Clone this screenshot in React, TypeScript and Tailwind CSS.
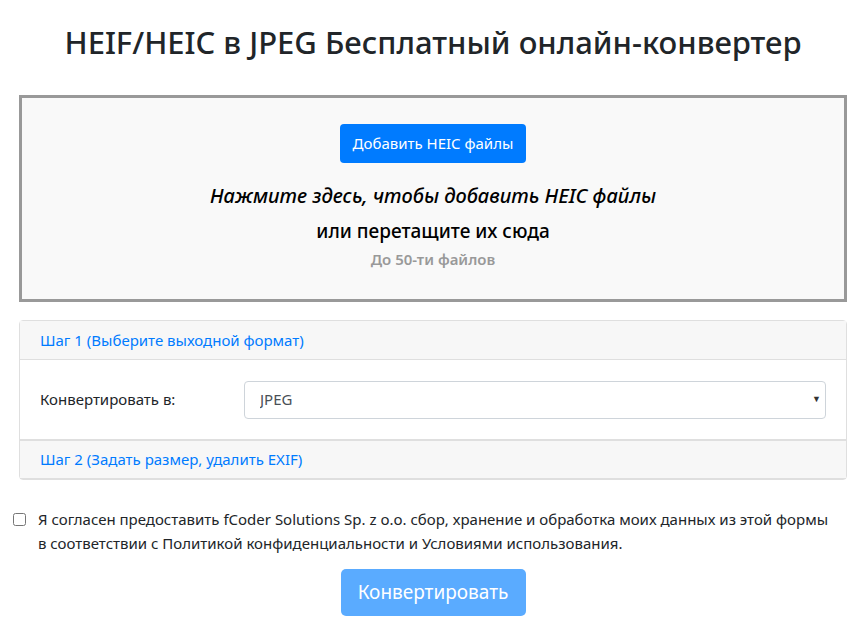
import React, { useState } from 'react';

const font = { fontFamily: '"Noto Sans", "Open Sans", sans-serif' };

const App: React.FC = () => {
  const [agreed, setAgreed] = useState(false);
  const [format, setFormat] = useState('JPEG');

  return (
    <div className="min-h-screen bg-white text-[#212529] font-['Noto_Sans',sans-serif]" style={font}>
      <div className="px-[19px]">
        {/* Title */}
        <h1 className="pt-[18px] pb-[29px] text-center text-[31px] font-medium leading-[48px] text-[#212529]">
          HEIF/HEIC в JPEG Бесплатный онлайн-конвертер
        </h1>

        {/* Drop zone */}
        <div className="flex h-[207px] flex-col items-center border-[3px] border-[#999999] bg-[#f9f9f9] pt-[26px]">
          <button className="h-[39px] rounded-[4px] bg-[#007bff] px-[13px] text-[15px] text-white">
            Добавить HEIC файлы
          </button>
          <p className="mt-[19px] text-[20px] font-medium italic leading-[28px] text-black">
            Нажмите здесь, чтобы добавить HEIC файлы
          </p>
          <p className="mt-[7px] text-[19px] font-medium leading-[28px] text-black">или перетащите их сюда</p>
          <p className="mt-[3px] text-[15px] font-semibold leading-[22px] text-[#999999]">До 50-ти файлов</p>
        </div>

        {/* Steps card */}
        <div className="mt-[18px] rounded-[4px] border border-[#dfdfdf]">
          <div className="flex h-[39px] items-center border-b border-[#dfdfdf] bg-[#f7f7f7] px-[20px] text-[15px] text-[#007bff]">
            Шаг 1 (Выберите выходной формат)
          </div>
          <div className="flex h-[79px] items-center px-[20px]">
            <label className="w-[204px] text-[15px]">Конвертировать в:</label>
            <div className="relative flex-1">
              <select
                value={format}
                onChange={(e) => setFormat(e.target.value)}
                className="h-[38px] w-full appearance-none rounded-[4px] border border-[#ced4da] bg-white pl-[15px] text-[15px] text-[#495057]"
              >
                <option>JPEG</option>
                <option>PNG</option>
              </select>
              <span className="pointer-events-none absolute right-[5px] top-[11px] text-[9px] text-[#333]">▼</span>
            </div>
          </div>
          <div className="flex h-[40px] items-center border-t-2 border-b border-[#dfdfdf] bg-[#f7f7f7] px-[20px] text-[15px] text-[#007bff]">
            Шаг 2 (Задать размер, удалить EXIF)
          </div>
        </div>
      </div>

      {/* Consent */}
      <div className="mt-[27px] flex items-start pl-[13px] pr-[28px] text-[15px] leading-[24px]">
        <input
          type="checkbox"
          checked={agreed}
          onChange={(e) => setAgreed(e.target.checked)}
          className="mt-[6px] h-[13px] w-[13px] shrink-0"
        />
        <p className="ml-[12px]">
          Я согласен предоставить fCoder Solutions Sp. z o.o. сбор, хранение и обработка моих данных из этой формы в соответствии с Политикой конфиденциальности и Условиями использования.
        </p>
      </div>

      {/* Convert */}
      <div className="mt-[14px] flex justify-center">
        <button disabled className="h-[47px] w-[185px] rounded-[5px] bg-[#5aabff] text-[19px] text-white">
          Конвертировать
        </button>
      </div>
    </div>
  );
};

export default App;
